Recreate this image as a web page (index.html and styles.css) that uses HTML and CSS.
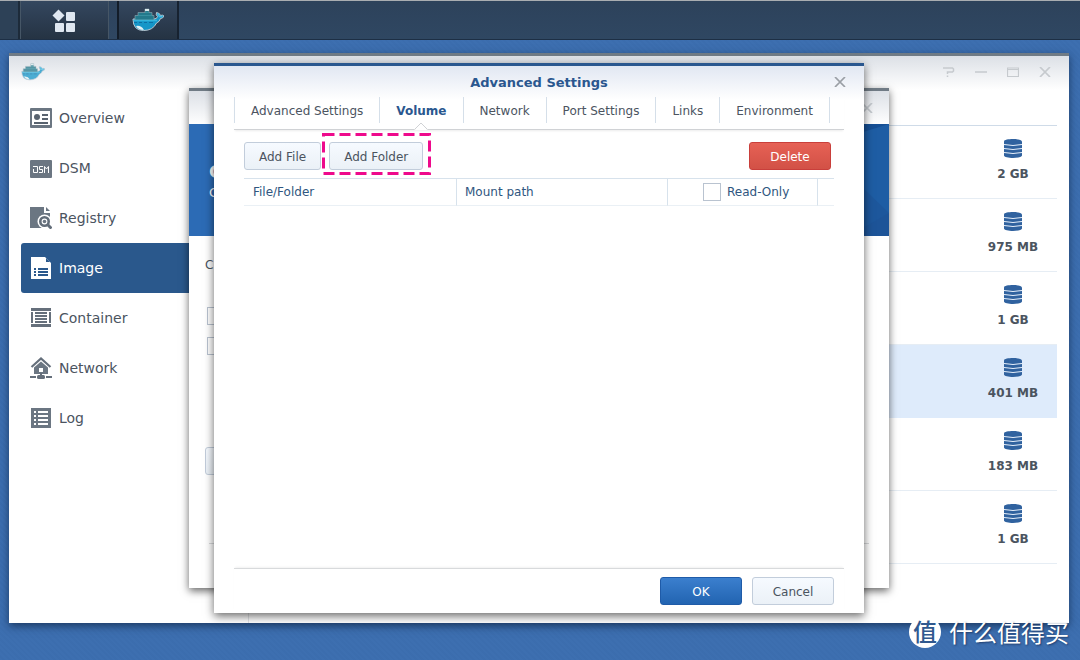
FILE: index.html
```html
<!DOCTYPE html>
<html lang="en">
<head>
<meta charset="utf-8">
<title>Docker</title>
<link rel="stylesheet" href="styles.css">
</head>
<body>
<svg class="defs" aria-hidden="true">
  <symbol id="whale" viewBox="0 0 32 24">
    <path d="M1 11H22Q25 11 25.500 8.500Q23.500 7 24.500 4.500Q28 5 28.500 7.500Q30.500 6.500 32 8Q31 10.500 28.500 10.500Q27.500 14 24.500 15Q21 22.500 11.500 22.500Q1 22.500 1 11Z" fill="#1596c8" stroke="#b9c6cf" stroke-width="1"/>
    <path d="M3 12V7.500H6V4.500H13V1H17V4.500H20V7.500H22V12Z" fill="#24798c" stroke="#8fa9b4" stroke-width=".6"/>
    <path d="M13 1h4v2h-4z" fill="#dcebed"/>
    <path d="M6 7.500H20M13 4.500H17" stroke="#3f9aa9" stroke-width=".7"/>
    <path d="M1.500 12.500H25" stroke="#35b4dc" stroke-width="1.400"/>
    <path d="M2 14.500h3M7 14.500h3M12 14.500h3M17 14.500h4" stroke="#0c6fa3"/>
    <path d="M4 18Q9 17 12 22Q6 22 4 18Z" fill="#e3f1f5"/>
    <path d="M25.500 5.500L27.500 8.500L30.500 8.500" stroke="#44bde4" stroke-width="1.500" fill="none"/>
  </symbol>
  <symbol id="db" viewBox="0 0 18 19">
    <path d="M0 2.500C0-.7 18-.7 18 2.500V16.500C18 19.800 0 19.800 0 16.500Z" fill="#30629f"/>
    <path d="M0 5.500Q9 7.500 18 5.500M0 9.500Q9 11.500 18 9.500M0 13.500Q9 15.500 18 13.500" fill="none" stroke="#e6effa" stroke-width="1"/>
  </symbol>
  <symbol id="close" viewBox="0 0 12 10">
    <path d="M1 0L11 10M11 0L1 10" fill="none" stroke="currentColor" stroke-width="1.700"/>
  </symbol>
</svg>
<header class="taskbar">
  <span class="task-edge"></span>
  <button class="task task-menu" aria-label="Main menu">
    <svg width="24" height="24" viewBox="0 0 24 24"><g fill="#dfe7f1"><path d="M6.500 .5L12.500 6.500L6.500 12.500L.5 6.500Z"/><rect x="14" y="3" width="9" height="9" rx="1"/><rect x="3" y="14" width="9" height="9" rx="1"/><rect x="14" y="14" width="9" height="9" rx="1"/></g></svg>
  </button>
  <button class="task task-app" aria-label="Docker"><svg width="32" height="24"><use href="#whale"/></svg></button>
</header>
<main class="desktop">
  <section class="window app" aria-label="Docker">
    <div class="app-bar">
      <svg class="app-logo" width="24" height="18"><use href="#whale"/></svg>
      <div class="app-controls">
        <button aria-label="Help"><svg width="12" height="10" viewBox="0 0 12 10"><path d="M0 1H9.500L10.500 2V4L9.500 5H4.500V7M4.500 8.500V10" fill="none" stroke="currentColor" stroke-width="1.500"/></svg></button>
        <button aria-label="Minimize"><svg width="12" height="10"><path d="M0 5H12" stroke="currentColor" stroke-width="1.500"/></svg></button>
        <button aria-label="Maximize"><svg width="12" height="10"><path d="M0 1H12M.5 1V9.500H11.500V1M0 2.500H12" fill="none" stroke="currentColor" stroke-width="1.200"/></svg></button>
        <button aria-label="Close"><svg width="12" height="10"><use href="#close"/></svg></button>
      </div>
    </div>
    <div class="app-body">
      <nav class="sidebar">
        <a href="#overview"><svg width="22" height="22" viewBox="0 0 22 22"><rect y="1" width="22" height="20" rx="1" fill="#6b7682"/><path d="M2 4H20V18H2Z" fill="#fff"/><circle cx="7" cy="10" r="3" fill="#59636f"/><path d="M12 8H18M12 12H18M4 16H18" stroke="#59636f" stroke-width="2"/></svg>Overview</a>
        <a href="#dsm"><svg width="22" height="22" viewBox="0 0 22 22"><rect y="3" width="22" height="18" rx="1" fill="#6b7682"/><path d="M3 9.500H7.500V15.500H3.500V12M13 9.500H9.500V12.500H12.500V15.500H9M14.500 16V9.500L16.500 12L18.500 9.500V16" fill="none" stroke="#fff" stroke-width="1"/></svg>DSM</a>
        <a href="#registry"><svg width="22" height="22" viewBox="0 0 22 22"><path d="M0 0H14V6H20V21H0Z" fill="#6b7682"/><path d="M16 0L20 4H16Z" fill="#6b7682"/><circle cx="14.500" cy="14.500" r="7" fill="#fff"/><path d="M18 18L22 22" stroke="#fff" stroke-width="5"/><circle cx="14.500" cy="14.500" r="4.200" fill="#fff" stroke="#626d79" stroke-width="2.600"/><circle cx="14.500" cy="14.500" r="1.800" fill="#6b7682"/><path d="M17.500 17.500L21.500 21.500" stroke="#626d79" stroke-width="3"/></svg>Registry</a>
        <a class="current" href="#image"><svg width="22" height="22" viewBox="0 0 22 22"><path d="M1 0H15L21 6V22H1Z" fill="#fff"/><path d="M16 1V5H20Z" fill="#2a588c"/><path d="M4 12H6M8 12H18M4 15H6M8 15H18M4 18H6M8 18H18" stroke="#2a588c" stroke-width="2"/></svg>Image</a>
        <a href="#container"><svg width="22" height="22" viewBox="0 0 22 22"><path d="M1 1H21V4H1ZM1 17H21V20H1ZM1 5H3V16H1ZM19 5H21V16H19Z" fill="#656f7b"/><path d="M5 6H17M5 9H17M5 12H17M5 15H17" stroke="#656f7b" stroke-width="2"/></svg>Container</a>
        <a href="#network"><svg width="22" height="22" viewBox="0 0 22 22"><path d="M1.500 10L11 1.500L20.500 10" fill="none" stroke="#656f7b" stroke-width="2.200"/><path d="M4 10.500L11 4.500L18 10.500V17H4Z" fill="#6b7682"/><path d="M9 11H13V15H9Z" fill="#fff"/><path d="M0 20H6M16 20H22M11 16V19" stroke="#656f7b" stroke-width="2"/><rect x="7" y="18" width="8" height="4" rx="1.500" fill="#656f7b"/></svg>Network</a>
        <a href="#log"><svg width="22" height="22" viewBox="0 0 22 22"><rect x="1" y="1" width="20" height="20" fill="#6b7682"/><path d="M4 5H6M8 5H18M4 9H6M8 9H18M4 13H6M8 13H18M4 17H6M8 17H18" stroke="#fff" stroke-width="2"/></svg>Log</a>
      </nav>
      <ul class="images">
        <li><svg width="18" height="19"><use href="#db"/></svg>2 GB</li>
        <li><svg width="18" height="19"><use href="#db"/></svg>975 MB</li>
        <li><svg width="18" height="19"><use href="#db"/></svg>1 GB</li>
        <li class="picked"><svg width="18" height="19"><use href="#db"/></svg>401 MB</li>
        <li><svg width="18" height="19"><use href="#db"/></svg>183 MB</li>
        <li><svg width="18" height="19"><use href="#db"/></svg>1 GB</li>
      </ul>
    </div>
  </section>

  <section class="window wizard" aria-label="Container">
    <div class="wizard-bar"><button aria-label="Close"><svg width="12" height="10"><use href="#close"/></svg></button></div>
    <div class="banner">
      <div><strong>C</strong><span>C</span></div>
      <svg width="200" height="112" viewBox="0 0 200 112"><path d="M60 112L160 0H200V112Z" fill="#1e5da4"/><path d="M160 0H200L174 8Z" fill="#164f94"/><path d="M174 64L200 89L174 105Z" fill="#1d579c"/><path d="M200 89V112H160Z" fill="#1d5498"/></svg>
    </div>
    <div class="wizard-form">
      <span>C</span>
      <div class="options">
        <input type="checkbox" aria-label="Option 1">
        <input type="checkbox" aria-label="Option 2">
      </div>
      <button class="btn wizard-btn" aria-label="More"></button>
    </div>
    <div class="wizard-foot"></div>
  </section>

  <section class="window dialog" role="dialog" aria-labelledby="title">
    <div class="dialog-bar">
      <h1 id="title">Advanced Settings</h1>
      <button aria-label="Close"><svg width="12" height="10"><use href="#close"/></svg></button>
    </div>
    <div class="tabs" role="tablist">
      <button role="tab">Advanced Settings</button>
      <button role="tab" class="active" aria-selected="true">Volume
        <svg class="pointer" width="14" height="8" viewBox="0 0 14 8"><path d="M0 7.500H1L7 1L13 7.500H14V8H0Z" fill="#fff"/><path d="M.5 7.500L7 1L13.500 7.500" fill="none" stroke="#d0d2d5"/></svg></button>
      <button role="tab">Network</button>
      <button role="tab">Port Settings</button>
      <button role="tab">Links</button>
      <button role="tab">Environment</button>
    </div>
    <div class="toolbar">
      <button class="btn">Add File</button>
      <div class="marked">
        <button class="btn">Add Folder</button>
        <svg class="marker" width="109" height="42"><rect x="1.500" y="1.500" width="106" height="39" fill="none" stroke="#ee0a8c" stroke-width="3" stroke-dasharray="11 5"/></svg>
      </div>
      <button class="btn danger">Delete</button>
    </div>
    <table>
      <colgroup><col class="col-file"><col><col class="col-ro"><col class="col-end"></colgroup>
      <thead><tr><th>File/Folder</th><th>Mount path</th><th class="ro"><label><input type="checkbox">Read-Only</label></th><td></td></tr></thead>
    </table>
    <div class="dialog-foot">
      <button class="btn primary">OK</button>
      <button class="btn wide">Cancel</button>
    </div>
  </section>
  <div class="watermark" lang="zh"><span class="seal">值</span>什么值得买</div>
</main>
</body>
</html>
```
FILE: styles.css
```css
* { box-sizing: border-box; }
body {
  margin: 0;
  height: 100vh;
  display: flex;
  flex-direction: column;
  overflow: hidden;
  font: 12px/16px "DejaVu Sans", sans-serif;
  color: #4b545f;
  background: #3b6dae;
}
button { padding: 0; border: 0; background: none; font: inherit; color: inherit; }
svg { display: block; }
input[type=checkbox] { appearance: none; flex: none; width: 18px; height: 18px; margin: 0; border: 1px solid #b9c3d0; background: #fff; }
.defs { position: absolute; width: 0; height: 0; }

.taskbar {
  display: flex;
  height: 40px;
  flex: none;
  border-top: 1px solid #a9adb1;
  border-bottom: 1px solid #1d2f45;
  background: linear-gradient(#2d425b, #2f4762);
  box-shadow: 0 1px 3px rgba(10, 30, 60, .5);
}
.task-edge { width: 20px; border-right: 2px solid #1d2b3a; background: #2d4157; }
.task {
  display: flex;
  align-items: center;
  justify-content: center;
  background: linear-gradient(#34475f, #253343);
  border: 1px solid #465666;
  border-width: 0 1px;
}
.task-menu { width: 89px; padding: 2px 2px 0 0; }
.task-app { width: 62px; margin-left: 8px; border-left: 2px solid #131d29; border-right: 2px solid #172230; }

.desktop {
  position: relative;
  flex: 1;
  background: repeating-linear-gradient(45deg, transparent 0 2px, rgba(20, 60, 120, .04) 2px 4px), #3d6fb0;
}
.window {
  position: absolute;
  display: flex;
  flex-direction: column;
  background: linear-gradient(#dce0e6, #fff 34px);
  border-top: 3px solid #707b85;
}

.app { inset: 13px 11px 37px 9px; box-shadow: 0 3px 8px rgba(10, 30, 60, .65); }
.app-bar { display: flex; justify-content: space-between; align-items: center; height: 32px; padding: 0 18px 0 12px; }
.app-logo { opacity: .75; }
.app-controls { display: flex; gap: 20px; color: #c6cace; }
.app-body { flex: 1; display: flex; padding: 0 12px; }
.sidebar { width: 228px; padding-top: 5px; border-right: 1px solid #e3e5e8; }
.sidebar a {
  display: flex;
  align-items: center;
  gap: 7px;
  height: 50px;
  padding-left: 9px;
  border-radius: 3px;
  font-size: 14px;
  color: #4b545f;
  text-decoration: none;
}
.sidebar a.current { background: #2a588c; color: #fff; }
.images { flex: 1; margin: 37px 0 0; padding: 0; list-style: none; border-top: 1px solid #cfdbe8; }
.images li {
  display: flex;
  flex-direction: column;
  align-items: center;
  gap: 8px;
  height: 73px;
  padding: 13px 0 0 calc(100% - 88px);
  border-bottom: 1px solid #e6edf4;
  font-weight: bold;
  white-space: nowrap;
}
.images .picked { background: #deebfb; border-color: #deebfb; }

.wizard { inset: 48px 191px 72px 189px; box-shadow: 0 3px 8px rgba(0, 0, 0, .6); }
.wizard-bar { display: flex; justify-content: flex-end; align-items: center; height: 33px; padding-right: 16px; color: #c3c8cd; }
.banner { display: flex; justify-content: space-between; height: 112px; background: #2c6bb5; color: #fff; }
.banner div { display: flex; flex-direction: column; padding: 38px 0 0 20px; gap: 4px; }
.banner strong { font-size: 18px; line-height: 20px; }
.banner span { font-size: 13px; line-height: 14px; }
.wizard-form { flex: 1; display: flex; flex-direction: column; align-items: flex-start; padding: 21px 16px 0; }
.options { display: flex; flex-direction: column; gap: 12px; padding: 34px 2px 0; }
.wizard-btn { margin-top: 92px; width: 80px; }
.wizard-foot { height: 45px; margin: 0 20px; border-top: 1px solid #d8dadc; }

.dialog {
  inset: 23px 216px 47px 214px;
  border-top-color: #2a578f;
  background: linear-gradient(#e1e7f2, #fff 34px);
  box-shadow: 0 3px 9px rgba(0, 0, 0, .6);
}
.dialog-bar { display: flex; justify-content: flex-end; align-items: center; height: 31px; padding: 1px 18px 0; color: #9a9fa5; }
.dialog-bar h1 { flex: 1; margin: 0 0 0 12px; padding-top: 1px; text-align: center; font-size: 13px; line-height: 32px; color: #2a578f; }
.tabs {
  display: flex;
  height: 33px;
  margin: 0 20px;
  padding-bottom: 6px;
  border-bottom: 1px solid #d0d2d5;
  box-shadow: 0 2px 2px -1px rgba(0, 0, 0, .08);
}
.tabs button { position: relative; padding: 2px 16px 0; border-right: 1px solid #d5dfe9; }
.tabs button:first-child { border-left: 1px solid #d5dfe9; }
.tabs .active { font-weight: bold; color: #2a578f; }
.pointer { position: absolute; left: calc(50% - 7px); bottom: -7px; }
.toolbar { display: flex; gap: 8px; padding: 12px 33px 8px 30px; }
.btn {
  height: 28px;
  padding: 1px 14px 0;
  border: 1px solid #c2cddb;
  border-radius: 3px;
  background: linear-gradient(#f6faff, #ebf1f7);
}
.marked { position: relative; }
.marker { position: absolute; left: -7px; top: -9px; pointer-events: none; }
.danger { width: 82px; margin-left: auto; border-color: #c93f3b; background: linear-gradient(#e66155, #d25146); color: #fff; }
table { width: calc(100% - 60px); margin: 0 30px; border-collapse: separate; border-spacing: 0; table-layout: fixed; }
th, td { height: 28px; padding: 0 8px; border: 1px solid #d7e2ec; border-width: 1px 1px 1px 0; border-bottom-color: #eaf0f5; text-align: left; font-weight: normal; color: #2f5680; }
th:first-child { padding-left: 9px; }
td { border-right: 0; }
.col-file { width: 213px; }
.col-ro { width: 150px; }
.col-end { width: 16px; }
.ro { padding: 0 0 0 35px; }
.ro label { display: flex; align-items: center; gap: 6px; }
.dialog-foot {
  display: flex;
  justify-content: flex-end;
  gap: 10px;
  margin: auto 20px 0;
  padding: 8px 10px;
  border-top: 1px solid #d8dadc;
  box-shadow: 0 -2px 2px -1px rgba(0, 0, 0, .06);
}
.primary, .wide { width: 82px; }
.primary { border-color: #1f5ba8; background: linear-gradient(#3b7fce, #2264b1); color: #fff; }

.watermark {
  position: absolute;
  right: 11px;
  bottom: 12px;
  display: flex;
  align-items: center;
  gap: 8px;
  font: 24px/32px "Noto Sans CJK SC", sans-serif;
  color: #fff;
  text-shadow: 1px 1px 2px rgba(20, 40, 80, .7);
}
.seal {
  width: 32px;
  height: 32px;
  border-radius: 50%;
  background: #fff;
  color: #30598f;
  font-size: 24px;
  line-height: 30px;
  font-weight: 500;
  text-align: center;
  text-shadow: none;
}
```
